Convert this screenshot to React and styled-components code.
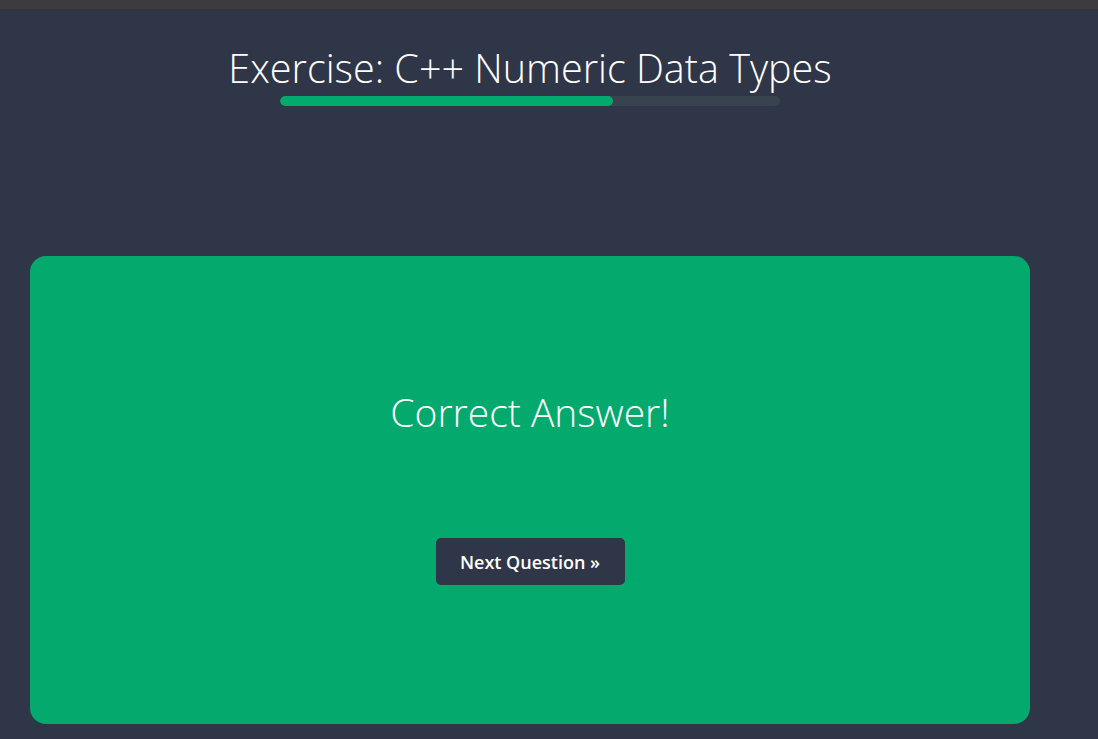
import React from "react";
import styled, { createGlobalStyle } from "styled-components";

const Global = createGlobalStyle`
  html, body { margin: 0; padding: 0; }
  body {
    background: #2e3648;
    font-family: "Open Sans", "Noto Sans", sans-serif;
    color: #fff;
    min-height: 739px;
  }
`;

const TopBar = styled.div`
  height: 9px;
  background: #3c3b40;
  border-bottom: 2px solid #333238;
`;

const Main = styled.main`
  width: 1000px;
  margin-left: 30px;
  display: flex;
  flex-direction: column;
  align-items: center;
`;

const Title = styled.h1`
  margin: 32px 0 0;
  font-weight: 300;
  font-size: 39.5px;
  line-height: 50px;
  letter-spacing: 0;
`;

const Track = styled.div`
  width: 500px;
  height: 10px;
  border-radius: 5px;
  background: #38434f;
  margin-top: 3px;
  overflow: hidden;
`;

const Fill = styled.div`
  height: 100%;
  background: #04aa6d;
  border-radius: 5px;
`;

const Card = styled.section`
  margin-top: 150px;
  width: 1000px;
  height: 468px;
  background: #04aa6d;
  border-radius: 16px;
  display: flex;
  flex-direction: column;
  align-items: center;
`;

const Message = styled.h2`
  margin: 131px 0 0;
  font-weight: 300;
  font-size: 39px;
  line-height: 50px;
`;

const NextButton = styled.button`
  margin-top: 101px;
  width: 189px;
  height: 47px;
  border: none;
  border-radius: 5px;
  background: #2e3648;
  color: #fff;
  font-family: "Open Sans", "Noto Sans", sans-serif;
  font-weight: 600;
  font-size: 18px;
  cursor: pointer;
`;

export default function App() {
  const progress = 66.6;
  return (
    <>
      <Global />
      <TopBar />
      <Main>
        <Title>Exercise: C++ Numeric Data Types</Title>
        <Track>
          <Fill style={{ width: `${progress}%` }} />
        </Track>
        <Card>
          <Message>Correct Answer!</Message>
          <NextButton>Next Question »</NextButton>
        </Card>
      </Main>
    </>
  );
}
